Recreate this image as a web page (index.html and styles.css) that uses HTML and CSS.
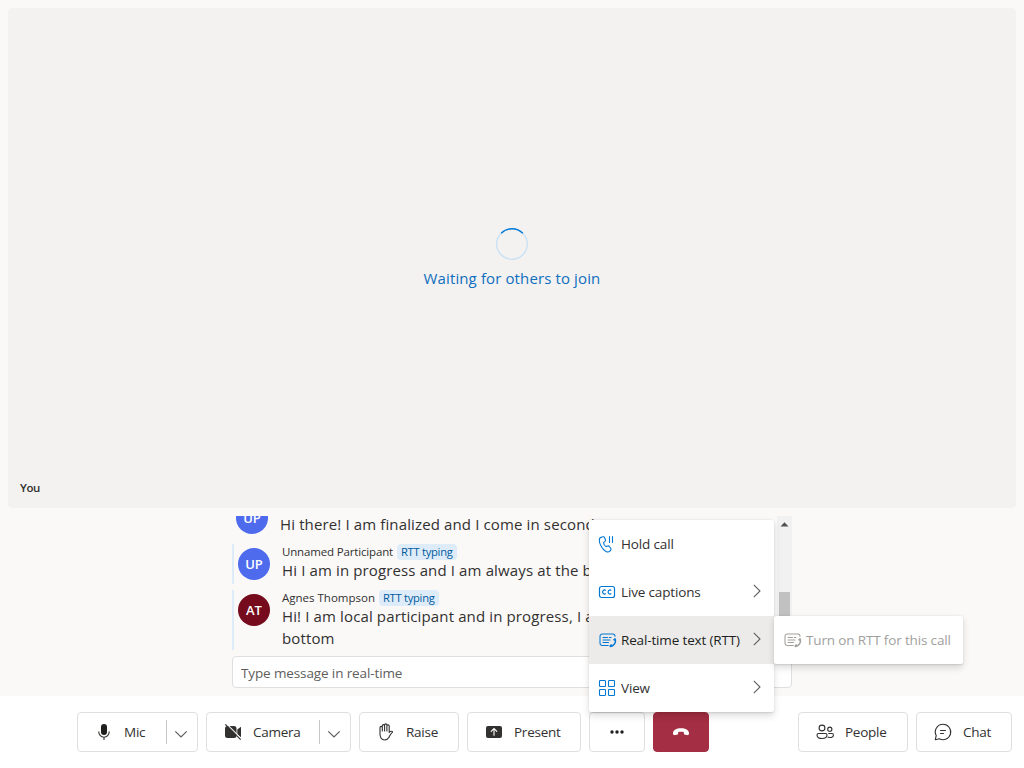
FILE: index.html
```html
<!DOCTYPE html>
<html lang="en">
<head>
<meta charset="utf-8">
<title>Call</title>
<link rel="stylesheet" href="styles.css">
</head>
<body>
<svg class="defs" width="0" height="0">
  <symbol id="rtt" viewBox="0 0 18 18">
    <path d="M9.300 14.500H3.300A2.300 2.300 0 0 1 1 12.200V5.300A2.300 2.300 0 0 1 3.300 3H13.700A2.300 2.300 0 0 1 16 5.300M4 6.500h4.500M4 9h7M4 11.500h5.500M10.300 6.500h1.700" fill="none" stroke="currentColor" stroke-width="1.050" stroke-linecap="round"/>
    <path d="M16.300 8.500c.8 3-1.200 6.200-4.800 6.900" fill="none" stroke="currentColor" stroke-width="1.500" stroke-linecap="round"/>
    <path d="M15.200 8.700l.7-.5M11.500 15l.8-.8" fill="none" stroke="currentColor" stroke-width="2" stroke-linecap="round"/>
  </symbol>
  <symbol id="right" viewBox="0 0 16 16"><path d="M4.800 1.800L11 8l-6.200 6.200" fill="none" stroke="currentColor" stroke-width="1.100"/></symbol>
  <symbol id="down" viewBox="0 0 14 14"><path d="M1.300 4.300L7 10 12.700 4.300" fill="none" stroke="currentColor" stroke-width="1.200"/></symbol>
</svg>
<main class="stage">
  <section class="video">
    <div class="waiting">
      <svg class="spinner" viewBox="0 0 32 32"><circle cx="16" cy="16" r="15.300" fill="none" stroke="#c7e0f4" stroke-width="1.300"/><path d="M5.200 5.200A15.300 15.300 0 0 1 26.800 5.200" fill="none" stroke="#0078d4" stroke-width="1.400"/></svg>
      <div class="waiting-text">Waiting for others to join</div>
    </div>
    <div class="you">You</div>
  </section>
  <section class="captions">
    <div class="scroller">
      <div class="messages">
        <div class="row final"><div class="avatar blue">UP</div><div class="body"><div class="text">Hi there! I am finalized and I come in second</div></div></div>
        <div class="row typing"><div class="avatar blue">UP</div><div class="body"><div class="name"><span class="n1">Unnamed Participant</span><span class="tag">RTT typing</span></div><div class="text">Hi I am in progress and I am always at the bottom</div></div></div>
        <div class="row typing"><div class="avatar red">AT</div><div class="body"><div class="name"><span class="n2">Agnes Thompson</span><span class="tag">RTT typing</span></div><div class="text">Hi! I am local participant and in progress, I am always at the<br>bottom</div></div></div>
      </div>
      <div class="scrollbar"><svg viewBox="0 0 15 17"><path d="M3.500 10.500L7.500 6.300l4 4.200z" fill="#505050"/></svg><div class="thumb"></div></div>
    </div>
    <div class="input">Type message in real-time</div>
  </section>
</main>
<footer class="bar">
  <div class="group">
    <div class="split mic"><div class="main"><svg class="ic" viewBox="0 0 20 20"><rect x="7" y="2" width="6" height="11" rx="3" fill="#201f1e"/><path d="M4.800 9.500v.5a5.200 5.200 0 0 0 10.400 0v-.5M10 15.200V18" fill="none" stroke="#323130" stroke-width="1.100"/></svg><span>Mic</span></div><div class="chev"><svg viewBox="0 0 14 14"><use href="#down"/></svg></div></div>
    <div class="split cam"><div class="main"><svg class="ic" viewBox="0 0 20 20"><path d="M4.500 4H11a2.500 2.500 0 0 1 2.500 2.500v7A2.500 2.500 0 0 1 11 16H4.500A2.500 2.500 0 0 1 2 13.500v-7A2.500 2.500 0 0 1 4.500 4zM14.300 7.500L18 4.700v10.600l-3.700-2.800z" fill="#323130"/><path d="M3.300 1.700l15.400 15.400" stroke="#fff" stroke-width="1.200"/><path d="M2.300 2.300l15.400 15.400" stroke="#323130" stroke-width="1.200"/></svg><span>Camera</span></div><div class="chev"><svg viewBox="0 0 14 14"><use href="#down"/></svg></div></div>
    <div class="btn raise"><svg class="ic" viewBox="0 0 20 20"><path d="M4 9V5.500a1.150 1.150 0 0 1 2.300 0V3.800a1.150 1.150 0 0 1 2.300 0v-.8a1.150 1.150 0 0 1 2.300 0v1a1.150 1.150 0 0 1 2.300 0V10.500c.8-1.200 2-1.500 3-1.100.4.200.4.600.1.900-1.700 1.400-2.200 3.100-3.500 5.300C12 17.200 10.600 18 8.700 18 5.300 18 4 14.900 4 12zM6.300 5V9M8.600 3.500V9M10.900 3.500V9" fill="none" stroke="#323130" stroke-width="1.100" stroke-linecap="round" stroke-linejoin="round"/></svg><span>Raise</span></div>
    <div class="btn present"><svg class="ic" viewBox="0 0 20 20"><rect x="2" y="4" width="16" height="12" rx="2" fill="#323130"/><path d="M10 13.300V7M7.200 9.400L10 6.600l2.800 2.800" fill="none" stroke="#fff" stroke-width="1.100" stroke-linecap="round"/></svg><span>Present</span></div>
    <div class="btn more"><svg class="ic" viewBox="0 0 20 20" fill="#201f1e"><circle cx="5" cy="10" r="1.700"/><circle cx="10" cy="10" r="1.700"/><circle cx="15" cy="10" r="1.700"/></svg></div>
    <div class="btn end"><svg class="ic" viewBox="0 0 20 20"><path d="M10 6.200c4.600 0 7.800 2 8 4.700.1 1.500-.5 2.400-1.700 2.200l-2.300-.4c-.8-.2-1.200-.7-1.200-1.500v-1.100c-1.800-.6-3.800-.6-5.600 0v1.100c0 .8-.4 1.300-1.200 1.500l-2.300.4c-1.200.2-1.800-.7-1.700-2.200.2-2.700 3.400-4.700 8-4.700z" fill="#fff"/></svg></div>
  </div>
  <div class="group">
    <div class="btn people"><svg class="ic" viewBox="0 0 20 20"><g fill="none" stroke="#323130" stroke-width="1.100"><circle cx="7" cy="6" r="2.900"/><path d="M3.500 11.500h7A1.500 1.500 0 0 1 12 13c0 2.500-2 3.500-5 3.500S2 15.500 2 13a1.500 1.500 0 0 1 1.500-1.500z"/><circle cx="14.800" cy="7.200" r="2.100"/><path d="M13.300 11.500h3.700a1.400 1.400 0 0 1 1.400 1.400c0 1.900-1.500 2.600-3.700 2.600-.8 0-1.500-.1-2.100-.4"/></g></svg><span>People</span></div>
    <div class="btn chat"><svg class="ic" viewBox="0 0 20 20"><path d="M10 2.300a7.700 7.700 0 1 1-3.600 14.500L2.300 17.700l.9-4.100A7.700 7.700 0 0 1 10 2.300zM7.500 8.500h5M7.500 11.500h3" fill="none" stroke="#323130" stroke-width="1.100" stroke-linecap="round" stroke-linejoin="round"/></svg><span>Chat</span></div>
  </div>
</footer>
<div class="menu">
  <div class="item"><svg class="mi" viewBox="0 0 20 20"><path d="M4.600 3.100l1-.3c.8-.3 1.700.1 2 .9l.8 1.800c.3.700.1 1.400-.4 1.900L6.600 8.700c.1 1.200 1.300 3.400 2.300 3.900l1.900-.6c.7-.2 1.400.1 1.800.7l1.100 1.600c.5.700.4 1.600-.2 2.200l-.7.700c-.7.700-1.800 1-2.800.7-2.400-.8-4.400-2.900-5.900-5.800-1.600-2.900-2.100-5.500-1.500-7.600.2-.7.900-1.200 2-1.400zM12.500 2.500v6M15.500 2.500v6" fill="none" stroke="currentColor" stroke-width="1.100" stroke-linecap="round"/></svg><span>Hold call</span></div>
  <div class="item"><svg class="mi" viewBox="0 0 20 20"><rect x="2.500" y="4.500" width="15" height="11" rx="2" fill="none" stroke="currentColor" stroke-width="1.200"/><path d="M8.800 8.400A2 2 0 1 0 8.800 11.600M14.300 8.400A2 2 0 1 0 14.300 11.600" fill="none" stroke="currentColor" stroke-width="1.200"/></svg><span>Live captions</span><svg class="arrow" viewBox="0 0 16 16"><use href="#right"/></svg></div>
  <div class="item active"><svg class="rtt" viewBox="0 0 18 18"><use href="#rtt"/></svg><span>Real-time text (RTT)</span><svg class="arrow" viewBox="0 0 16 16"><use href="#right"/></svg></div>
  <div class="item"><svg class="mi" viewBox="0 0 20 20"><g fill="none" stroke="currentColor" stroke-width="1.100"><rect x="2.500" y="2.500" width="6" height="6" rx=".8"/><rect x="11.500" y="2.500" width="6" height="6" rx=".8"/><rect x="2.500" y="11.500" width="6" height="6" rx=".8"/><rect x="11.500" y="11.500" width="6" height="6" rx=".8"/></g></svg><span>View</span><svg class="arrow" viewBox="0 0 16 16"><use href="#right"/></svg></div>
</div>
<div class="menu submenu"><div class="item disabled"><svg class="rtt" viewBox="0 0 18 18"><use href="#rtt"/></svg><span>Turn on RTT for this call</span></div></div>
</body>
</html>
```
FILE: styles.css
```css
* { box-sizing: border-box; }
body { margin: 0; width: 1024px; height: 768px; overflow: hidden; background: #fff; color: #323130; font: 13.5px "Open Sans", "Noto Sans", sans-serif; position: relative; white-space: nowrap; }
svg { display: block; flex: none; }
.defs { position: absolute; }
.stage { height: 696px; background: #faf9f8; padding: 8px; display: flex; flex-direction: column; gap: 8px; }
.video { height: 500px; background: #f3f2f1; border-radius: 4px; display: flex; flex-direction: column; }
.waiting { flex: 1; display: flex; flex-direction: column; align-items: center; padding-top: 220px; gap: 7px; }
.spinner { width: 32px; height: 32px; }
.waiting-text { color: #106ebe; font-size: 15px; line-height: 22px; letter-spacing: .12px; }
.you { font-size: 11.5px; font-weight: 600; line-height: 16px; padding: 0 12px 12px; letter-spacing: -.4px; }
.captions { width: 560px; margin: 0 auto; display: flex; flex-direction: column; gap: 6px; }
.scroller { height: 134px; overflow: hidden; display: flex; justify-content: space-between; }
.messages { width: 545px; display: flex; flex-direction: column; justify-content: flex-end; gap: 6px; overflow: hidden; }
.row { display: flex; gap: 12px; flex: none; }
.final { padding-left: 4px; height: 36px; }
.final .body { padding-top: 11px; }
.typing { border-left: 2px solid #deecf9; padding-left: 4px; }
.typing .body { height: 40px; }
.typing:last-child .body { height: 60px; }
.avatar { width: 32px; height: 32px; border-radius: 50%; color: #fff; font-size: 13px; font-weight: 600; line-height: 32px; text-align: center; flex: none; }
.typing .avatar { margin-top: 4px; }
.blue { background: #4f6bed; }
.red { background: #750b1c; }
.name { display: flex; gap: 4px; font-size: 11.5px; line-height: 16px; height: 16px; }
.n1 { width: 111px; letter-spacing: -.16px; }
.n2 { width: 93px; }
.tag { background: #deecf9; color: #005a9e; border-radius: 4px; padding: 0 4px; width: 60px; font-size: 11.2px; letter-spacing: -.28px; }
.text { font-size: 15px; line-height: 22px; letter-spacing: .13px; }
.typing .text { margin-top: -1px; }
.scrollbar { width: 15px; background: #f1f1f1; }
.scrollbar svg { width: 15px; height: 17px; }
.thumb { width: 11px; height: 50px; background: #c1c1c1; margin: 59px 0 0 2px; }
.input { height: 32px; border: 1px solid #e1dfdd; border-radius: 4px; background: #fff; color: #605e5c; line-height: 32px; padding-left: 8px; letter-spacing: -.12px; }
.bar { height: 72px; padding: 16px 12px 16px 77px; display: flex; justify-content: space-between; }
.bar span { letter-spacing: -.25px; }
.group { display: flex; gap: 8px; }
.btn, .split { height: 40px; border: 1px solid #e1dfdd; border-radius: 4px; background: #fff; display: flex; align-items: center; }
.btn { padding-left: 16px; gap: 10px; }
.main { flex: 1; display: flex; align-items: center; gap: 10px; padding-left: 16px; height: 24px; border-right: 1px solid #c8c6c4; }
.chev { width: 30px; display: flex; justify-content: center; padding: 4px 2px 0 0; }
.chev svg { width: 14px; height: 14px; color: #605e5c; }
.ic { width: 20px; height: 20px; }
.mic { width: 121px; }
.cam { width: 145px; }
.raise { width: 100px; }
.present { width: 114px; }
.more, .end { width: 56px; justify-content: center; padding: 0; }
.end { background: #a42e43; border-color: #a42e43; }
.people { width: 110px; }
.chat { width: 96px; }
.menu { position: absolute; left: 589px; top: 520px; width: 185px; background: #fff; border-radius: 2px; box-shadow: 0 3.2px 7.2px rgba(0,0,0,.132), 0 .6px 1.8px rgba(0,0,0,.108); }
.submenu { left: 774px; top: 616px; width: 189px; }
.item { height: 48px; display: flex; align-items: center; padding: 0 9px 0 8px; }
.mi { width: 20px; height: 20px; color: #0078d4; margin-right: 4px; }
.rtt { width: 18px; height: 18px; color: #0078d4; margin: 0 4px 0 2px; }
.item span { flex: 1; letter-spacing: -.15px; }
.arrow { width: 16px; height: 16px; color: #605e5c; margin-bottom: 2px; }
.active { background: #edebe9; color: #201f1e; }
.disabled, .disabled .rtt { color: #a19f9d; }
```
